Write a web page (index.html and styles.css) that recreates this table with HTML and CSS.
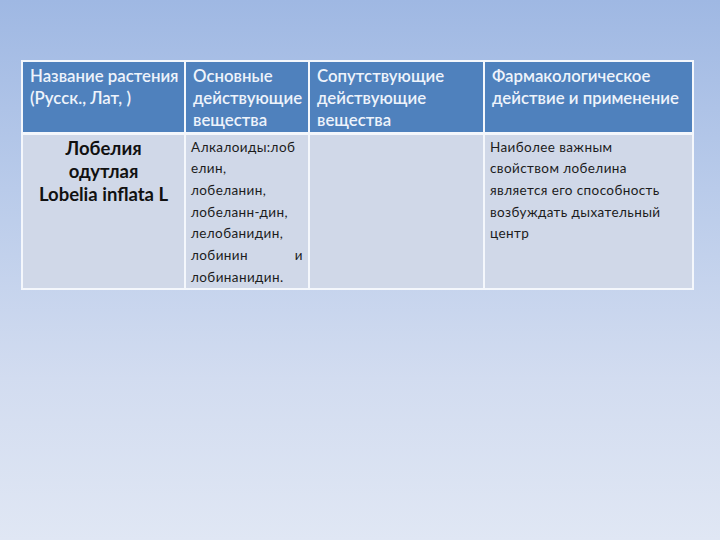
FILE: index.html
```html
<!DOCTYPE html>
<html lang="ru">
<head>
<meta charset="utf-8">
<link rel="stylesheet" href="styles.css">
</head>
<body>
<div class="slide">
  <table class="grid">
    <colgroup>
      <col class="c1"><col class="c2"><col class="c3"><col class="c4">
    </colgroup>
    <thead>
      <tr>
        <th>Название растения<br>(Русск., Лат, )</th>
        <th>Основные<br>действующие<br>вещества</th>
        <th>Сопутствующие<br>действующие<br>вещества</th>
        <th>Фармакологическое<br>действие и применение</th>
      </tr>
    </thead>
    <tbody>
      <tr>
        <td class="plant">Лобелия<br>одутлая<br>Lobelia inflata L</td>
        <td class="txt">
          <span class="ln">Алкалоиды:лоб</span>
          <span class="ln">елин,</span>
          <span class="ln">лобеланин,</span>
          <span class="ln">лобеланн-дин,</span>
          <span class="ln">лелобанидин,</span>
          <span class="ln split"><span>лобинин</span><span>и</span></span>
          <span class="ln">лобинанидин.</span>
        </td>
        <td></td>
        <td class="txt">
          <span class="ln">Наиболее важным</span>
          <span class="ln">свойством лобелина</span>
          <span class="ln">является его способность</span>
          <span class="ln">возбуждать дыхательный</span>
          <span class="ln">центр</span>
        </td>
      </tr>
    </tbody>
  </table>
</div>
</body>
</html>
```
FILE: styles.css
```css
html, body {
  margin: 0;
  padding: 0;
}
body {
  width: 720px;
  height: 540px;
  overflow: hidden;
}
.slide {
  width: 720px;
  height: 540px;
  background: linear-gradient(180deg, #9fb8e3 0%, #b9cbea 35%, #d2dcf0 70%, #e0e7f4 100%);
  padding: 60px 0 0 21px;
  box-sizing: border-box;
}
.grid {
  border-collapse: collapse;
  table-layout: fixed;
  width: 671px;
  font-family: Lato, "Open Sans", "Liberation Sans", sans-serif;
  border: 2px solid #eef2fa;
}
.c1 { width: 163px; }
.c2 { width: 124px; }
.c3 { width: 175px; }
.c4 { width: 209px; }
.grid th, .grid td {
  border: 2px solid #f4f7fc;
  vertical-align: top;
  text-align: left;
}
.grid th {
  background: #4f81bd;
  color: #eef3fb;
  font-weight: 600;
  font-size: 16.8px;
  line-height: 22px;
  padding: 3px 2px 0 7px;
  height: 72px;
  box-sizing: border-box;
  white-space: nowrap;
  overflow: hidden;
}
.grid td {
  background: #d0d8e8;
  height: 155px;
  padding: 2px 5px 0 5px;
  box-sizing: border-box;
}
.grid thead tr th { border-bottom-width: 3px; }
.plant {
  font-weight: 700;
  font-size: 18.5px;
  line-height: 23px;
  color: #111;
  text-align: center !important;
  padding-top: 2px !important;
}
.txt {
  font-size: 13.5px;
  line-height: 21.7px;
  color: #1c1c1c;
  font-weight: 400;
  letter-spacing: 0.4px;
}
.ln {
  display: block;
  white-space: nowrap;
}
.split {
  display: flex;
  justify-content: space-between;
}
```
